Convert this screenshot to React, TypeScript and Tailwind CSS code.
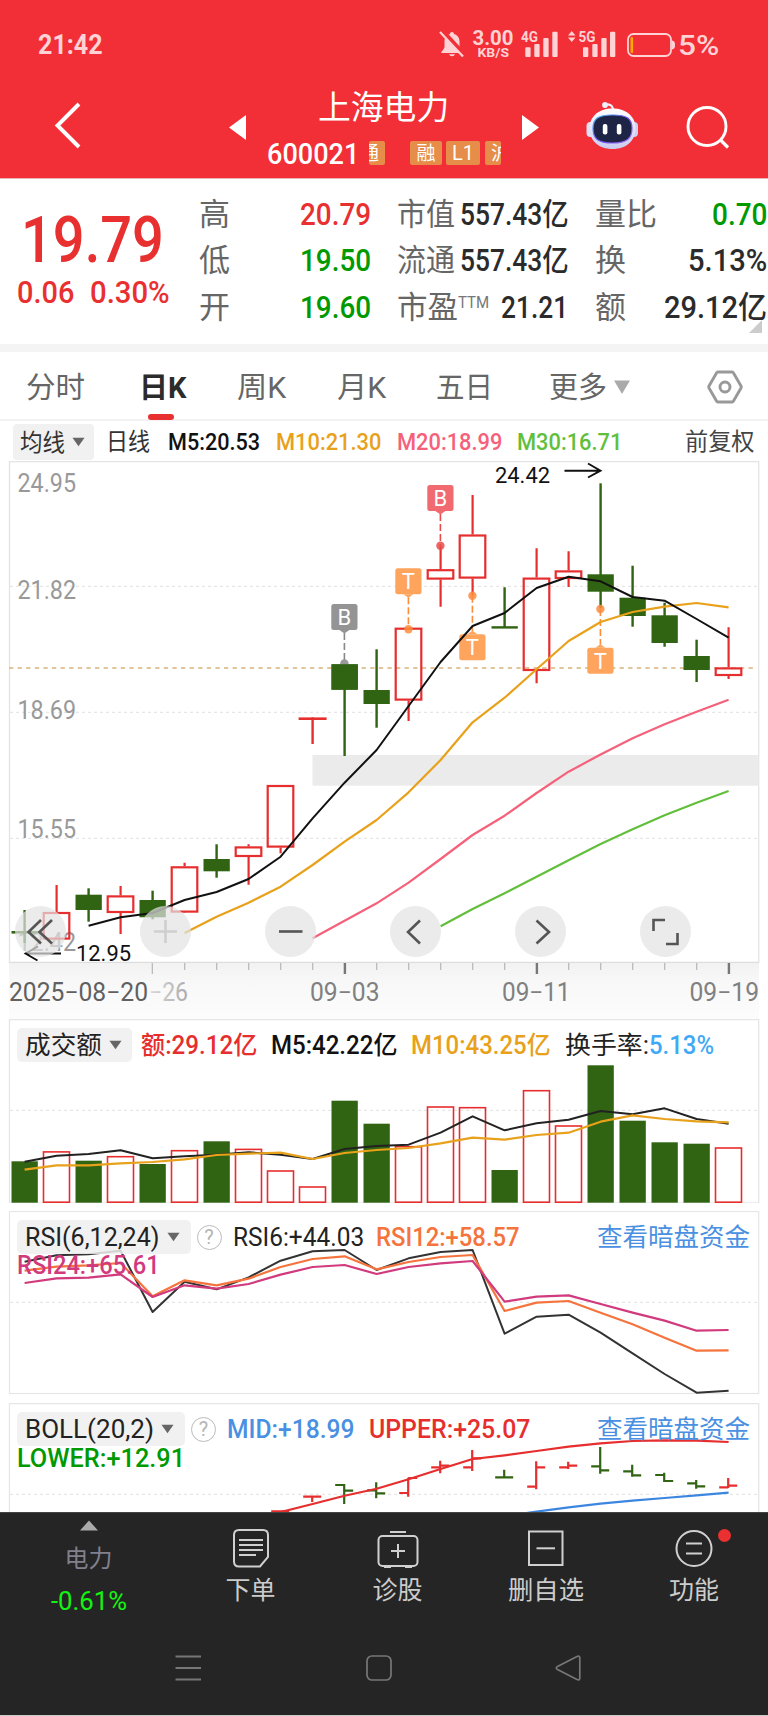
import { useLayoutEffect, useRef, type ReactNode } from "react";

/** Text squeezed or stretched horizontally to the width of its box. */
function Fit({ className = "", children }: { className?: string; children: ReactNode }) {
  const box = useRef<HTMLDivElement>(null);
  const text = useRef<HTMLSpanElement>(null);
  useLayoutEffect(() => {
    const b = box.current;
    const t = text.current;
    if (b && t && t.offsetWidth > 0) {
      t.style.transform = `scaleX(${b.clientWidth / t.offsetWidth})`;
    }
  });
  return (
    <div ref={box} className={`flex shrink-0 items-center ${className}`}>
      <span ref={text} className="inline-block origin-left whitespace-nowrap pt-[2px] leading-[1.2]">
        {children}
      </span>
    </div>
  );
}

const cx = (i: number) => 24.6 + 32 * i;
const pts = (start: number, ys: number[]) => ys.map((y, k) => `${cx(start + k)},${y}`).join(" ");

const RED = "#e62e2e";
const GREEN = "#306412";

type Candle = { up: boolean; top: number; bottom: number; high: number; low: number };
const c = (up: boolean, top: number, bottom: number, high: number, low: number): Candle => ({ up, top, bottom, high, low });

const candles: Candle[] = [
  c(false, 931, 933.6, 910, 943),
  c(true, 912, 939.6, 885, 939),
  c(false, 894.7, 910, 888.3, 921.7),
  c(true, 895.4, 913, 886, 934),
  c(false, 900, 917.3, 890.7, 919.3),
  c(true, 866.3, 912.6, 862.7, 912),
  c(false, 859, 871.3, 844.3, 877.7),
  c(true, 846.4, 857, 844.3, 884.7),
  c(true, 785, 847.6, 785, 853.3),
  c(true, 717.4, 720, 718, 744),
  c(false, 664.3, 689.7, 664, 756),
  c(false, 690, 704, 649.3, 727.7),
  c(true, 627.7, 700.6, 628, 721),
  c(true, 569.2, 579.6, 545.7, 606.7),
  c(true, 534.5, 578.6, 495, 595.7),
  c(false, 626.2, 628.6, 587.3, 628),
  c(true, 577.6, 671, 548.3, 683.3),
  c(true, 570.4, 579, 551.3, 587),
  c(false, 574.3, 591.7, 483.3, 608.3),
  c(false, 597.7, 616, 565.7, 626.7),
  c(false, 615.3, 643, 602.7, 646.7),
  c(false, 656, 670, 639.7, 682),
  c(true, 667.4, 676, 627.3, 679),
];

function CandleShape({ d, x }: { d: Candle; x: number }) {
  if (!d.up) {
    return (
      <g fill={GREEN}>
        <rect x={x - 1.2} y={d.high} width={2.4} height={d.low - d.high} />
        <rect x={x - 13.1} y={d.top} width={26.3} height={d.bottom - d.top} />
      </g>
    );
  }
  if (d.bottom - d.top < 4) {
    return (
      <g fill={RED}>
        <rect x={x - 14} y={d.top} width={28} height={d.bottom - d.top} />
        <rect x={x - 1.2} y={d.top} width={2.4} height={d.low - d.top} />
      </g>
    );
  }
  return (
    <g stroke={RED} strokeWidth={2.2} fill="none">
      <path d={`M${x} ${d.high}V${d.top}M${x} ${d.bottom}V${d.low}`} />
      <rect x={x - 12.9} y={d.top + 1} width={25.6} height={d.bottom - d.top - 2} />
    </g>
  );
}

function Marker({ i, y, dot, label, color, line }: { i: number; y: number; dot: number; label: string; color: string; line: string }) {
  const x = cx(i) - 0.2;
  const above = y < dot;
  return (
    <g>
      <path d={above ? `M${x} ${y + 29}V${dot}` : `M${x} ${dot}V${y - 3}`} stroke={line} strokeWidth={1.6} strokeDasharray="7 3" />
      <circle cx={x} cy={dot} r={4.2} fill={line} opacity={0.85} />
      <rect x={x - 13.1} y={y} width={26.2} height={26} rx={2.5} fill={color} />
      <path d={above ? `M${x - 5} ${y + 26}h10l-5 3.5z` : `M${x - 5} ${y}h10l-5 -3.5z`} fill={color} />
      <text x={x} y={y + 20.8} textAnchor="middle" fill="#fff" className="font-[Roboto] text-[22px]">
        {label}
      </text>
    </g>
  );
}

function Label({ x, y, w, fill = "#999", className = "font-[Roboto] text-[25px]", children }: { x: number; y: number; w: number; fill?: string; className?: string; children: string }) {
  return (
    <text x={x} y={y} fill={fill} textLength={w} lengthAdjust="spacingAndGlyphs" className={className}>
      {children}
    </text>
  );
}

function Line({ points, color, w = 2.2 }: { points: string; color: string; w?: number }) {
  return <polyline points={points} fill="none" stroke={color} strokeWidth={w} strokeLinejoin="round" />;
}

function Grid({ y }: { y: number }) {
  return <path d={`M10 ${y}H757`} stroke="#e6e6e6" strokeWidth={1.2} strokeDasharray="3 3" />;
}

function Down({ className = "" }: { className?: string }) {
  return (
    <svg viewBox="0 0 14 10" className={`h-[10px] w-[13px] shrink-0 ${className}`}>
      <path d="M0.5 0.5h13l-6.5 9z" fill="#666" />
    </svg>
  );
}

function Help({ className = "" }: { className?: string }) {
  return (
    <div className={`flex h-[25px] w-[25px] shrink-0 items-center justify-center rounded-full border-[1.6px] border-[#bbb] text-[20px] leading-none text-[#b5b5b5] ${className}`}>
      ?
    </div>
  );
}

function StatusBar() {
  return (
    <div className="flex h-[89px] items-start pt-[27px] text-[#ffd3d5]">
      <Fit className="ml-[38px] h-[34px] w-[65px] text-[27px] font-bold">21:42</Fit>
      <svg viewBox="0 0 26 28" className="ml-[336px] mt-[3px] h-[28px] w-[26px] shrink-0">
        <path d="M13 2c-1.2 0-2 .8-2 2C7.500 5 5.500 8 5.500 11.500V17c0 2-3 4-3.500 6h22c-.5-2-3.500-4-3.500-6v-5.500C20.500 8 18.500 5 15 4c0-1.200-.8-2-2-2z" fill="#ffd3d5" />
        <path d="M10 24.200h6c-.5 1.300-1.600 2-3 2s-2.500-.7-3-2z" fill="#ffd3d5" />
        <path d="M3 .5L25.500 25" stroke="#f22f37" strokeWidth={4.500} />
        <path d="M1 2L24 26.500" stroke="#ffd3d5" strokeWidth={2.200} />
      </svg>
      <svg viewBox="472 27 147 34" className="ml-[7px] h-[34px] w-[147px] shrink-0" fill="#ffd3d5">
        <text x="472.500" y="45" textLength="41" lengthAdjust="spacingAndGlyphs" className="font-[Roboto] text-[20px] font-bold">3.00</text>
        <text x="477.500" y="57" textLength="31.500" lengthAdjust="spacingAndGlyphs" className="font-[Roboto] text-[13.500px] font-bold">KB/S</text>
        <text x="521" y="42" textLength="17" lengthAdjust="spacingAndGlyphs" className="font-[Roboto] text-[15px] font-bold">4G</text>
        <text x="578.5" y="42" textLength="17" lengthAdjust="spacingAndGlyphs" className="font-[Roboto] text-[15px] font-bold">5G</text>
        <rect x="525.300" y="47.300" width="5.300" height="9.700" rx="1" />
        <rect x="534.300" y="44" width="5.300" height="13" rx="1" />
        <rect x="543.300" y="38" width="5.300" height="19" rx="1" />
        <rect x="552.300" y="31.700" width="5.300" height="25.300" rx="1" />
        <rect x="583" y="47.300" width="5.300" height="9.700" rx="1" />
        <rect x="592.300" y="44" width="5.300" height="13" rx="1" />
        <rect x="601.300" y="38" width="5.300" height="19" rx="1" />
        <rect x="610" y="31.700" width="5.300" height="25.300" rx="1" />
        <path d="M568 35.500h7.500l-3.750-4.500zM568 37.500h7.500l-3.750 4.500z" />
      </svg>
      <svg viewBox="0 0 50 26" className="ml-[7px] mt-[5px] h-[26px] w-[50px] shrink-0">
        <rect x="2" y="2" width="43" height="22" rx="5.500" fill="none" stroke="#ffd3d5" strokeWidth="1.800" />
        <path d="M46 8.500c2.500.3 3 2 3 4.500s-.5 4.200-3 4.500z" fill="#ffd3d5" />
        <rect x="4.500" y="5" width="2.600" height="16" rx="1" fill="#ffa800" />
      </svg>
      <Fit className="ml-[2px] mt-[1px] h-[34px] w-[41px] text-[27px] font-medium">5%</Fit>
    </div>
  );
}

function Tag({ className, children }: { className: string; children: ReactNode }) {
  return <div className={`flex h-[24px] shrink-0 items-center overflow-hidden whitespace-nowrap rounded-[2px] bg-[#e58d49] text-[19px] leading-none text-white ${className}`}>{children}</div>;
}

function TitleBar() {
  return (
    <div className="flex h-[89px] text-white">
      <svg viewBox="0 0 30 50" className="ml-[53px] mt-[11px] h-[50px] w-[30px] shrink-0">
        <path d="M26 4L4.500 25.500L26 47" fill="none" stroke="#fff" strokeWidth={3.900} />
      </svg>
      <svg viewBox="0 0 17 25" className="ml-[146px] mt-[26px] h-[25px] w-[17px] shrink-0">
        <path d="M17 0v25L0 12.500z" fill="#fff" />
      </svg>
      <div className="ml-[20px] w-[236px]">
        <div className="ml-[52px] h-[47px] whitespace-nowrap text-[32.800px] leading-[39px]">上海电力</div>
        <div className="flex h-[34px] items-center">
          <Fit className="ml-[1px] w-[92px] text-[30px] font-medium">600021</Fit>
          <Tag className="ml-[10px] w-[16px] justify-end pr-[6px]">通</Tag>
          <Tag className="ml-[25px] w-[32px] justify-center">融</Tag>
          <Tag className="ml-[4px] w-[34px] justify-center"><span className="text-[20px]">L1</span></Tag>
          <Tag className="ml-[5px] w-[16px] pl-[6px]">沪</Tag>
        </div>
      </div>
      <svg viewBox="0 0 17 25" className="ml-[20px] mt-[26px] h-[25px] w-[17px] shrink-0">
        <path d="M0 0v25L17 12.500z" fill="#fff" />
      </svg>
      <svg viewBox="586 100 52 50" className="ml-[47px] mt-[11px] h-[50px] w-[52px] shrink-0">
        <defs>
          <linearGradient id="shell" x1="0" y1="0" x2="0" y2="1">
            <stop offset="0" stopColor="#ffffff" />
            <stop offset="1" stopColor="#c9cbf0" />
          </linearGradient>
          <linearGradient id="rim" x1="0" y1="0" x2="1" y2="1">
            <stop offset="0" stopColor="#45c8f0" />
            <stop offset="0.5" stopColor="#6b4df0" />
            <stop offset="1" stopColor="#a066f5" />
          </linearGradient>
        </defs>
        <path d="M605 104.500c5-.5 8 1 8 6" fill="none" stroke="#eef0fb" strokeWidth={2.200} />
        <circle cx="605" cy="105" r="2.900" fill="#eef0fb" />
        <rect x="586.500" y="122" width="9" height="15" rx="4" fill="#dfe0f8" />
        <rect x="629" y="122" width="9" height="15" rx="4" fill="#d0d0f5" />
        <path d="M612.500 108.500c14 0 23 8 23 20s-9 20.500-23 20.500-23-8.500-23-20.500 9-20 23-20z" fill="url(#shell)" />
        <path d="M612.500 115c14.500 0 19.500 3.500 19.500 13.500s-5 14.500-19.500 14.500-19.500-4.500-19.500-14.500 5-13.500 19.500-13.500z" fill="#1d2445" stroke="url(#rim)" strokeWidth={1.200} />
        <rect x="602.800" y="124" width="4.600" height="10.500" rx="2" fill="#fff" />
        <rect x="616.800" y="124" width="4.600" height="10.500" rx="2" fill="#fff" />
      </svg>
      <svg viewBox="686 104 44 46" className="ml-[48px] mt-[15px] h-[46px] w-[44px] shrink-0">
        <circle cx="707" cy="126.500" r="19" fill="none" stroke="#fff" strokeWidth={2.900} />
        <path d="M720.500 140l7.500 7.500" stroke="#fff" strokeWidth={3.200} />
      </svg>
    </div>
  );
}

function Quote() {
  return (
    <section className="flex h-[165px] shrink-0 bg-white text-[31px]">
      <div className="w-[180px] shrink-0 text-[#e93030]">
        <Fit className="ml-[21px] mt-[27px] h-[65px] w-[143px] text-[65px] font-medium">19.79</Fit>
        <div className="mt-[4px] flex font-medium">
          <Fit className="ml-[17px] h-[34px] w-[57px] text-[31.500px]">0.06</Fit>
          <Fit className="ml-[16px] h-[34px] w-[80px] text-[31.500px]">0.30%</Fit>
        </div>
      </div>
      <div className="ml-[19px] mt-[11px] w-[172px] shrink-0">
        {[
          ["高", "20.79", "text-[#e93030]"],
          ["低", "19.50", "text-[#009a00]"],
          ["开", "19.60", "text-[#009a00]"],
        ].map(([k, v, color]) => (
          <div key={k} className="flex h-[46.500px] items-center justify-between">
            <Fit className="w-[31px] text-[#666]">{k}</Fit>
            <Fit className={`w-[71px] font-medium ${color}`}>{v}</Fit>
          </div>
        ))}
      </div>
      <div className="ml-[26px] mt-[11px] w-[172px] shrink-0">
        {["市值", "流通"].map((k) => (
          <div key={k} className="flex h-[46.500px] items-center justify-between">
            <Fit className="w-[58px] text-[#666]">{k}</Fit>
            <Fit className="w-[109px] font-medium text-[#2b2b2b]">557.43亿</Fit>
          </div>
        ))}
        <div className="flex h-[46.500px] items-center">
          <Fit className="w-[61px] text-[#666]">市盈</Fit>
          <Fit className="mt-[-10px] h-[20px] w-[31px] text-[17px] text-[#777]">TTM</Fit>
          <Fit className="ml-[12px] w-[67px] font-medium text-[#2b2b2b]">21.21</Fit>
        </div>
      </div>
      <div className="ml-[26px] mt-[11px] w-[172px] shrink-0">
        {[
          ["量比", "0.70", "w-[62px]", "w-[55px] text-[#009a00]"],
          ["换", "5.13%", "w-[31px]", "w-[79px] text-[#2b2b2b]"],
          ["额", "29.12亿", "w-[31px]", "w-[103px] text-[#2b2b2b]"],
        ].map(([k, v, kw, w]) => (
          <div key={k} className="flex h-[46.500px] items-center justify-between">
            <Fit className={`text-[#666] ${kw}`}>{k}</Fit>
            <Fit className={`font-medium ${w}`}>{v}</Fit>
          </div>
        ))}
        <svg viewBox="0 0 13 13" className="ml-[154px] mt-[-10px] h-[13px] w-[13px]">
          <path d="M13 0v13H0z" fill="#ccc" />
        </svg>
      </div>
    </section>
  );
}

function Tabs() {
  return (
    <nav className="flex h-[69px] shrink-0 border-b-2 border-[#f3f3f3] bg-white text-[29px] leading-[70px] text-[#666]">
      <Fit className="ml-[26px] h-[70px] w-[59px]">分时</Fit>
      <div className="ml-[54px] w-[48px]">
        <Fit className="h-[62px] w-[47px] pt-[8px] font-bold text-[#2b2b2b]">日K</Fit>
        <div className="ml-[9px] h-[6px] w-[26px] rounded-full bg-[#e93030]" />
      </div>
      <Fit className="ml-[50px] h-[70px] w-[49px]">周K</Fit>
      <Fit className="ml-[51px] h-[70px] w-[49px]">月K</Fit>
      <Fit className="ml-[50px] h-[70px] w-[57px]">五日</Fit>
      <Fit className="ml-[56px] h-[70px] w-[58px]">更多</Fit>
      <svg viewBox="0 0 16 14" className="ml-[7px] mt-[28px] h-[14px] w-[16px] shrink-0">
        <path d="M0 .5h16L8 14z" fill="#aaa" />
      </svg>
      <svg viewBox="0 0 36 34" className="ml-[77px] mt-[18px] h-[34px] w-[36px] shrink-0" fill="none" stroke="#999" strokeWidth={2.900} strokeLinejoin="round">
        <path d="M11 2h14q1 0 1.500 1L34 16q.5 1 0 2l-7.500 13q-.5 1-1.500 1H11q-1 0-1.500-1L2 18q-.5-1 0-2L9.500 3q.5-1 1.500-1z" />
        <circle cx="18" cy="17" r="5" />
      </svg>
    </nav>
  );
}

function MaRow() {
  return (
    <div className="flex h-[40px] shrink-0 items-center bg-white text-[23.500px] text-[#333]">
      <div className="ml-[13px] mt-[2px] flex h-[36px] w-[81px] shrink-0 items-center rounded-[4px] bg-[#f1f1f1]">
        <Fit className="ml-[7px] w-[45px]">均线</Fit>
        <Down className="ml-[7px]" />
      </div>
      <Fit className="ml-[12px] w-[44px] pt-[1px]">日线</Fit>
      <Fit className="ml-[18px] w-[92px] pt-[1px] font-medium text-[#111]">M5:20.53</Fit>
      <Fit className="ml-[16px] w-[105px] pt-[1px] font-medium text-[#e8a11a]">M10:21.30</Fit>
      <Fit className="ml-[16px] w-[105px] pt-[1px] font-medium text-[#f5617a]">M20:18.99</Fit>
      <Fit className="ml-[15px] w-[105px] pt-[1px] font-medium text-[#62bf3c]">M30:16.71</Fit>
      <Fit className="ml-[63px] w-[70px] pt-[1px] text-[#444]">前复权</Fit>
    </div>
  );
}

function RoundButton({ faint = false, d }: { faint?: boolean; d: string }) {
  return (
    <button className="flex h-[51px] w-[51px] shrink-0 items-center justify-center rounded-full bg-[#e3e3e3]/70">
      <svg viewBox="0 0 51 51" className="h-[51px] w-[51px]" fill="none" stroke={faint ? "#cfcfcf" : "#555"} strokeWidth={2.600}>
        <path d={d} />
      </svg>
    </button>
  );
}

function MainChart() {
  return (
    <div className="grid h-[502px] shrink-0 bg-white">
      <svg viewBox="0 461 768 502" className="h-[502px] w-[768px] [grid-area:1/1]">
        <path d="M9.500 963V461.700H758.700V963" fill="none" stroke="#e4e4e4" strokeWidth={1.300} />
        <path d="M9.500 962.300H758.700" stroke="#ddd" strokeWidth={1.300} />
        <rect x="312.500" y="755" width="446" height="30.700" fill="#ebebeb" />
        <Grid y={586.400} />
        <Grid y={712.400} />
        <Grid y={838.300} />
        <path d="M9 668H757" stroke="#d8b47c" strokeWidth={1.600} strokeDasharray="4.300 4.300" />
        <Label x={17.500} y={492} w={58.500}>24.95</Label>
        <Label x={17.500} y={599} w={58.500}>21.82</Label>
        <Label x={17.500} y={718.500} w={58.500}>18.69</Label>
        <Label x={17.500} y={838} w={58.500}>15.55</Label>
        <Label x={17.500} y={951} w={58.500}>12.42</Label>
        {candles.map((d, i) => (
          <CandleShape key={i} d={d} x={cx(i)} />
        ))}
        <Marker i={10} y={604} dot={663.500} label="B" color="#949494" line="#888" />
        <rect x={331.500} y={664.300} width={26.300} height={25.400} fill={GREEN} />
        <Marker i={12} y={568.300} dot={629.300} label="T" color="#fea45d" line="#fb8c3c" />
        <Marker i={13} y={485} dot={545.700} label="B" color="#f06a70" line="#e94b4b" />
        <Marker i={14} y={634.300} dot={595.700} label="T" color="#fea45d" line="#fb8c3c" />
        <Marker i={18} y={647.700} dot={609} label="T" color="#fea45d" line="#fb8c3c" />
        <Line color="#62bf3c" points={pts(13, [926.3, 909, 893.3, 876.7, 860.3, 844, 829.3, 815.3, 802.7, 791])} />
        <Line color="#f5617a" points={pts(9, [938.3, 920.7, 903.3, 882.7, 859, 835, 815.7, 793, 771.7, 754.5, 738.3, 724.3, 711.7, 699.7])} />
        <Line color="#e8a11a" points={pts(5, [933, 916.7, 902.7, 886.7, 865, 841.7, 820, 792.3, 760, 722.3, 697.7, 669.3, 641, 622, 612, 606.7, 603, 607.3])} />
        <Line color="#111" w={2} points={pts(2, [925.7, 917.3, 913, 900, 892, 879, 856.7, 818.3, 782.7, 750, 706, 662, 626, 613, 588, 576.7, 581.3, 597, 600.7, 619, 637.7])} />
        <Label x={495} y={483.300} w={55} fill="#111" className="font-[Roboto] text-[21.500px]">24.42</Label>
        <path d="M564.500 470.700H600M588 463.500L600.500 470.700L588 477.500" fill="none" stroke="#111" strokeWidth={1.900} />
        <Label x={76} y={960.700} w={55} fill="#111" className="font-[Roboto] text-[21.500px]">12.95</Label>
        <path d="M61 953.500H25.500M38 946.500L25.500 953.500L37.500 960.500" fill="none" stroke="#111" strokeWidth={1.900} />
      </svg>
      <div className="ml-[15px] mb-[6px] flex gap-[74px] self-end [grid-area:1/1]">
        <RoundButton d="M26 14L13.500 26L26 37.500M37 14L24.500 26L37 37.500" />
        <RoundButton faint d="M14 25.500H37M25.500 14V37" />
        <RoundButton d="M14 25.500H37.500" />
        <RoundButton d="M30 14.500L18 26L30 37.500" />
        <RoundButton d="M21.500 14.500L34 26L21.500 37.500" />
        <RoundButton d="M13.500 25V14H25M37.500 27V38H26" />
      </div>
    </div>
  );
}

function TimeAxis() {
  return (
    <svg viewBox="0 963 768 56" className="h-[56px] w-[768px] shrink-0">
      <defs>
        <linearGradient id="axis" x1="0" y1="0" x2="0" y2="1">
          <stop offset="0" stopColor="#f2f2f2" />
          <stop offset="0.35" stopColor="#f8f8f8" />
          <stop offset="1" stopColor="#fcfcfc" />
        </linearGradient>
        <linearGradient id="fade" x1="0" x2="1" y1="0" y2="0">
          <stop offset="0" stopColor="#dadada" />
          <stop offset="1" stopColor="#aaa" />
        </linearGradient>
      </defs>
      <rect x="9" y="963" width="750" height="56" fill="url(#axis)" />
      {Array.from({ length: 19 }, (_, k) => k + 4).map((i) => {
        const tall = i === 4 || i === 10 || i === 16 || i === 22;
        return <rect key={i} x={cx(i) - (tall ? 0.9 : 0.6)} y={963} width={tall && i > 4 ? 2.4 : 1.3} height={tall ? 11 : 7} fill={tall && i > 4 ? "#777" : "#bbb"} />;
      })}
      <Label x={9} y={1001.300} w={139} fill="#606060">2025−08−20</Label>
      <Label x={149} y={1001.300} w={39} fill="url(#fade)">−26</Label>
      <Label x={310} y={1001.300} w={69.500} fill="#808080">09−03</Label>
      <Label x={502} y={1001.300} w={68.500} fill="#808080">09−11</Label>
      <Label x={689.500} y={1001.300} w={69.500} fill="#808080">09−19</Label>
    </svg>
  );
}

const volumes: [boolean, number][] = [
  [false, 1161.3], [true, 1151.2], [false, 1160.7], [true, 1156], [false, 1164], [true, 1150], [false, 1141.3],
  [true, 1148.7], [true, 1170.3], [true, 1186.3], [false, 1100.7], [false, 1123.7], [true, 1146], [true, 1106.3],
  [true, 1107], [false, 1170], [true, 1090], [true, 1125.3], [false, 1065.3], [false, 1120.7], [false, 1142.3],
  [false, 1143.7], [true, 1147.3],
];

const third = (base: number, ys: number[]) => ys.map((y) => base + y / 3);

function VolumePanel() {
  return (
    <section className="grid h-[184px] shrink-0 bg-white">
      <svg viewBox="0 1019 768 184" className="h-[184px] w-[768px] [grid-area:1/1]">
        <path d="M9.500 1203V1019.700H758.700V1203" fill="none" stroke="#e6e6e6" strokeWidth={1.300} />
        <path d="M9.500 1202.300H758.700" stroke="#ececec" />
        <Grid y={1110.400} />
        {volumes.map(([up, y], i) =>
          up ? (
            <rect key={i} x={cx(i) - 13.100} y={y + 0.7} width={26} height={1202 - y - 0.5} fill="none" stroke={RED} strokeWidth={1.600} />
          ) : (
            <rect key={i} x={cx(i) - 13.100} y={y} width={26.300} height={1202.700 - y} fill={GREEN} />
          ),
        )}
        <Line color="#222" w={2} points={pts(0, third(1020, [425, 407, 402, 391, 415, 409, 404, 397, 404, 417, 387, 378, 374, 338, 289, 331, 310, 299, 273, 283, 265, 297, 311]))} />
        <Line color="#e8a11a" points={pts(0, third(1020, [449, 436, 436, 430, 426, 418, 405, 401, 398, 417, 399, 390, 384, 370, 353, 359, 345, 338, 305, 286, 297, 304, 307]))} />
      </svg>
      <div className="mt-[9px] flex h-[34px] items-center text-[25px] text-[#222] [grid-area:1/1]">
        <div className="ml-[17px] flex h-[34px] w-[115px] shrink-0 items-center rounded-[5px] bg-[#f1f1f1]">
          <Fit className="ml-[8px] w-[77px]">成交额</Fit>
          <Down className="ml-[7px]" />
        </div>
        <Fit className="ml-[9px] w-[116px] font-medium text-[#e62e2e]">额:29.12亿</Fit>
        <Fit className="ml-[14px] w-[126px] font-medium text-[#111]">M5:42.22亿</Fit>
        <Fit className="ml-[14px] w-[140px] font-medium text-[#e8a11a]">M10:43.25亿</Fit>
        <Fit className="ml-[14px] w-[84px]">换手率:</Fit>
        <Fit className="w-[65px] font-medium text-[#3fa9f5]">5.13%</Fit>
      </div>
    </section>
  );
}

function RsiPanel() {
  return (
    <section className="mt-[8px] grid h-[184px] shrink-0 bg-white">
      <svg viewBox="0 1211 768 184" className="h-[184px] w-[768px] [grid-area:1/1]">
        <rect x="9.500" y="1211.500" width="749.200" height="182" fill="none" stroke="#e6e6e6" strokeWidth={1.200} />
        <Grid y={1302.400} />
        <Line color="#333" w={2} points={pts(0, [...third(1020, [725, 706, 703, 692, 876, 785, 808, 772, 722, 694, 690, 750, 715, 696, 690]), 1333.7, 1316.7, 1314.7, 1332.7, 1353.3, 1374, 1392.7, 1390.7])} />
        <Line color="#f5733c" points={pts(0, [...third(1020, [752, 740, 736, 729, 829, 781, 796, 776, 741, 717, 709, 748, 726, 711, 705, 873, 848, 843, 878]), 1324.3, 1337.7, 1350.7, 1350.3])} />
        <Line color="#d13a7d" points={pts(0, [...third(1020, [789, 775, 773, 763, 831, 796, 806, 792, 764, 741, 735, 762, 741, 730, 723, 845, 830, 826, 852, 878, 902]), 1330.7, 1330])} />
      </svg>
      <div className="mt-[9px] text-[25px] text-[#222] [grid-area:1/1]">
        <div className="flex h-[34px] items-center">
          <div className="ml-[17px] flex h-[34px] w-[173.500px] shrink-0 items-center rounded-[5px] bg-[#eeeeee]/85">
            <Fit className="ml-[8px] w-[134px]">RSI(6,12,24)</Fit>
            <Down className="ml-[8px]" />
          </div>
          <Help className="ml-[6px]" />
          <Fit className="ml-[11px] w-[131px]">RSI6:+44.03</Fit>
          <Fit className="ml-[12px] w-[144px] font-medium text-[#f5733c]">RSI12:+58.57</Fit>
          <Fit className="ml-[77px] w-[153px] text-[#4a90e2]">查看暗盘资金</Fit>
        </div>
        <Fit className="ml-[17px] mt-[-4px] h-[30px] w-[143px] font-medium text-[#d13a7d]">RSI24:+65.61</Fit>
      </div>
    </section>
  );
}

// [index, left tick, right tick, top, bottom, rising]
const ohlc: [number, number, number, number, number, boolean][] = [
  [8, 574, 574, 574, 576, true],
  [9, 530, 530, 529, 546, true],
  [10, 495, 512, 492, 552, false],
  [11, 511, 520, 487, 535, false],
  [12, 519, 474, 473, 530, true],
  [13, 442, 437, 422, 460, true],
  [14, 442, 415, 390, 453, true],
  [15, 472, 472, 449, 473, false],
  [16, 500, 442, 424, 508, true],
  [17, 442, 437, 425, 447, true],
  [18, 439, 451, 381, 461, false],
  [19, 454, 466, 434, 470, false],
  [20, 465, 483, 458, 486, false],
  [21, 490, 499, 480, 506, false],
  [22, 502, 497, 474, 504, true],
];

function BollPanel() {
  return (
    <section className="mt-[8px] grid h-[109px] shrink-0 overflow-hidden bg-white">
      <svg viewBox="0 1403 768 109" className="h-[109px] w-[768px] [grid-area:1/1]">
        <path d="M9.500 1512V1403.600H758.700V1512" fill="none" stroke="#e6e6e6" strokeWidth={1.300} />
        <Grid y={1494.400} />
        {ohlc.map(([i, l, r, t, b, up]) => {
          const x = cx(i) - 0.4;
          return (
            <path
              key={i}
              d={`M${x - 9} ${1320 + l / 3}H${x}M${x} ${1320 + r / 3}H${x + 9}M${x} ${1320 + t / 3}V${1320 + b / 3}`}
              stroke={up ? RED : GREEN}
              strokeWidth={2.200}
            />
          );
        })}
        <Line color="#e62e2e" points={pts(8, [1512, 1504, 1495.7, 1488.7, 1479.3, 1469, 1459, 1455.3, 1451, 1446.7, 1443.3, 1441, 1440.3, 1440.7, 1442])} />
        <Line color="#3d86e0" points={pts(15, [1516, 1511.7, 1507.3, 1503.7, 1500.7, 1498, 1495.3, 1492.7])} />
      </svg>
      <div className="mt-[9px] text-[25px] text-[#222] [grid-area:1/1]">
        <div className="flex h-[34px] items-center">
          <div className="ml-[17px] flex h-[34px] w-[168px] shrink-0 items-center rounded-[5px] bg-[#f1f1f1]">
            <Fit className="ml-[8px] w-[129px]">BOLL(20,2)</Fit>
            <Down className="ml-[7px]" />
          </div>
          <Help className="ml-[6px]" />
          <Fit className="ml-[11px] w-[128px] font-medium text-[#4a90e2]">MID:+18.99</Fit>
          <Fit className="ml-[14px] w-[161px] font-medium text-[#e62e2e]">UPPER:+25.07</Fit>
          <Fit className="ml-[67px] w-[153px] text-[#4a90e2]">查看暗盘资金</Fit>
        </div>
        <Fit className="ml-[17px] mt-[-3px] h-[30px] w-[168px] font-medium text-[#009a00]">LOWER:+12.91</Fit>
      </div>
    </section>
  );
}

function Action({ label, w, children }: { label: string; w: string; children: ReactNode }) {
  return (
    <div className="flex flex-col items-center pt-[14px]">
      <svg viewBox="0 0 44 44" className="h-[44px] w-[44px]" fill="none" stroke="#d0d0d0" strokeWidth={2}>
        {children}
      </svg>
      <Fit className={`mt-[2px] h-[34px] text-[25px] text-[#ccc] ${w}`}>{label}</Fit>
    </div>
  );
}

function BottomBar() {
  return (
    <footer className="h-[203px] shrink-0 border-t border-[#444] bg-[#252525]">
      <div className="flex h-[128px]">
        <div className="flex w-[177px] flex-col items-center">
          <svg viewBox="0 0 18 10" className="mt-[7px] h-[11px] w-[18px]">
            <path d="M0 10h18L9 0z" fill="#aaa" />
          </svg>
          <Fit className="mt-[12px] h-[30px] w-[48px] text-[24px] text-[#83808e]">电力</Fit>
          <Fit className="mt-[13px] h-[30px] w-[76px] text-[26px] text-[#12f512]">-0.61%</Fit>
        </div>
        <div className="flex w-[147px] justify-center">
          <Action label="下单" w="w-[50px]">
            <path d="M10 3h24q5 0 5 5v22l-8 9.500H10q-5 0-5-5V8q0-5 5-5z" />
            <path d="M10 13h24M10 18h24M10 23h24M10 28h17" />
          </Action>
        </div>
        <div className="flex w-[147px] justify-center">
          <Action label="诊股" w="w-[50px]">
            <rect x="2.500" y="9" width="39" height="30" rx="4" />
            <path d="M14 5h16M22 17v14M15 24h14M8 40h7M29 40h7" />
          </Action>
        </div>
        <div className="flex w-[149px] justify-center">
          <Action label="删自选" w="w-[76px]">
            <rect x="5" y="4.500" width="33.500" height="33.500" />
            <path d="M12.500 21.300H31" />
          </Action>
        </div>
        <div className="grid w-[148px] justify-center">
          <div className="[grid-area:1/1]">
            <Action label="功能" w="w-[50px]">
              <circle cx="22" cy="21.500" r="17.500" />
              <path d="M14 16.500h16M14 26.500h16" />
            </Action>
          </div>
          <div className="ml-[49px] mr-[-12px] mt-[16px] h-[13px] w-[13px] rounded-full bg-[#ea3030] [grid-area:1/1]" />
        </div>
      </div>
      <div className="flex">
        <svg viewBox="0 0 28 28" className="ml-[174px] mt-[13px] h-[28px] w-[28px]" stroke="#777" strokeWidth={1.800}>
          <path d="M1.500 2.500h25.500M1.500 14h25.500M1.500 25.500h25.500" />
        </svg>
        <svg viewBox="0 0 28 28" className="ml-[163px] mt-[13px] h-[28px] w-[28px]" fill="none" stroke="#777" strokeWidth={1.700}>
          <rect x="2" y="2" width="24" height="24" rx="5" />
        </svg>
        <svg viewBox="0 0 28 28" className="ml-[161px] mt-[13px] h-[28px] w-[28px]" fill="none" stroke="#777" strokeWidth={1.700} strokeLinejoin="round">
          <path d="M3 12.800L23 2.500q2.800-1.300 2.800 1.500v20q0 2.800-2.800 1.500L3 15.200q-1.500-1.200 0-2.400z" />
        </svg>
      </div>
    </footer>
  );
}

export default function App() {
  return (
    <div className="flex h-[1716px] w-[768px] flex-col overflow-hidden bg-white font-['Roboto','Noto_Sans_CJK_SC',sans-serif]">
      <header className="h-[178px] shrink-0 bg-[#f22f37]">
        <StatusBar />
        <TitleBar />
      </header>
      <div className="h-px shrink-0 bg-[#e9b5b8]" />
      <Quote />
      <div className="h-[8px] shrink-0 bg-[#f4f4f4]" />
      <Tabs />
      <MaRow />
      <MainChart />
      <TimeAxis />
      <VolumePanel />
      <RsiPanel />
      <BollPanel />
      <BottomBar />
      <div className="h-px shrink-0 bg-[#ccc]" />
    </div>
  );
}
